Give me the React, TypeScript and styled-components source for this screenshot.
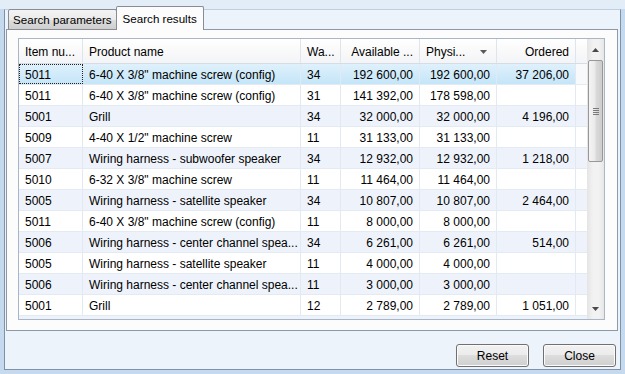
import React from 'react';
import styled, { createGlobalStyle } from 'styled-components';

type Align = 'left' | 'right';

interface Column {
  title: string;
  align: Align;
  sorted?: boolean;
}

interface Line {
  item: string;
  name: string;
  warehouse: string;
  available: string;
  physical: string;
  ordered: string;
}

const columns: Column[] = [
  { title: 'Item nu...', align: 'left' },
  { title: 'Product name', align: 'left' },
  { title: 'Wa...', align: 'left' },
  { title: 'Available ...', align: 'right' },
  { title: 'Physi...', align: 'left', sorted: true },
  { title: 'Ordered', align: 'right' },
];

const lines: Line[] = [
  { item: '5011', name: '6-40 X 3/8" machine screw (config)', warehouse: '34', available: '192 600,00', physical: '192 600,00', ordered: '37 206,00' },
  { item: '5011', name: '6-40 X 3/8" machine screw (config)', warehouse: '31', available: '141 392,00', physical: '178 598,00', ordered: '' },
  { item: '5001', name: 'Grill', warehouse: '34', available: '32 000,00', physical: '32 000,00', ordered: '4 196,00' },
  { item: '5009', name: '4-40 X 1/2" machine screw', warehouse: '11', available: '31 133,00', physical: '31 133,00', ordered: '' },
  { item: '5007', name: 'Wiring harness - subwoofer speaker', warehouse: '34', available: '12 932,00', physical: '12 932,00', ordered: '1 218,00' },
  { item: '5010', name: '6-32 X 3/8" machine screw', warehouse: '11', available: '11 464,00', physical: '11 464,00', ordered: '' },
  { item: '5005', name: 'Wiring harness - satellite speaker', warehouse: '34', available: '10 807,00', physical: '10 807,00', ordered: '2 464,00' },
  { item: '5011', name: '6-40 X 3/8" machine screw (config)', warehouse: '11', available: '8 000,00', physical: '8 000,00', ordered: '' },
  { item: '5006', name: 'Wiring harness - center channel spea...', warehouse: '34', available: '6 261,00', physical: '6 261,00', ordered: '514,00' },
  { item: '5005', name: 'Wiring harness - satellite speaker', warehouse: '11', available: '4 000,00', physical: '4 000,00', ordered: '' },
  { item: '5006', name: 'Wiring harness - center channel spea...', warehouse: '11', available: '3 000,00', physical: '3 000,00', ordered: '' },
  { item: '5001', name: 'Grill', warehouse: '12', available: '2 789,00', physical: '2 789,00', ordered: '1 051,00' },
];

const GRID_COLUMNS = '64px 218px 40px 79px 77px 79px 11px';

const GlobalStyle = createGlobalStyle`
  html, body {
    margin: 0;
    padding: 0;
  }
  body {
    font-family: "Liberation Sans", Arial, sans-serif;
    font-size: 12px;
    color: #000;
  }
`;

const Window = styled.div`
  width: 625px;
  height: 374px;
  box-sizing: border-box;
  padding: 9px 4px 4px 4px;
  display: flex;
  background: linear-gradient(#e3edf8 0, #e3edf8 9px, #c6daef 9px);
`;

const Client = styled.div`
  flex: 1;
  display: flex;
  flex-direction: column;
  padding: 0 2px 0 1px;
  background: #edf3fb;
  border: 1px solid #7f91a8;
  border-top-color: #bfcfe2;
`;

const TabStrip = styled.div`
  display: flex;
  align-items: flex-end;
  height: 20px;
  margin-bottom: -1px;
  padding-left: 2px;
  position: relative;
  z-index: 1;
`;

const Tab = styled.div<{ $active?: boolean }>`
  box-sizing: border-box;
  height: ${(p) => (p.$active ? '24px' : '21px')};
  padding: ${(p) => (p.$active ? '0 6px 1px 6px' : '0 4px')};
  display: flex;
  align-items: center;
  font-size: 11.6px;
  border: 1px solid #898c95;
  border-bottom: ${(p) => (p.$active ? 'none' : '1px solid #898c95')};
  border-radius: 2px 2px 0 0;
  white-space: nowrap;
  background: ${(p) =>
    p.$active
      ? '#fcfcfc'
      : 'linear-gradient(#f3f3f3 0%, #ebebeb 50%, #dddddd 51%, #cfcfcf 100%)'};
  margin-left: ${(p) => (p.$active ? '-1px' : '0')};
`;

const Panel = styled.div`
  box-sizing: border-box;
  height: 302px;
  padding: 8px 12px 10px 11px;
  background: #fcfcfc;
  border: 1px solid #8d99a8;
`;

const Grid = styled.div`
  box-sizing: border-box;
  height: 282px;
  display: flex;
  background: #fff;
  border: 1px solid #a9b6c6;
  overflow: hidden;
`;

const Table = styled.div`
  flex: 1;
  display: flex;
  flex-direction: column;
  overflow: hidden;
`;

const HeaderRow = styled.div`
  box-sizing: border-box;
  height: 25px;
  display: grid;
  grid-template-columns: ${GRID_COLUMNS};
  background: linear-gradient(#ffffff, #f3f4f6);
  border-bottom: 1px solid #d5dce5;
`;

const HeaderCell = styled.div<{ $align: Align }>`
  display: flex;
  align-items: center;
  justify-content: ${(p) => (p.$align === 'right' ? 'flex-end' : 'space-between')};
  padding: 1px 6px 0 6px;
  border-right: 1px solid #e0e5eb;
  white-space: nowrap;
  overflow: hidden;
`;

const SortMark = styled.svg`
  margin-right: 3px;
  flex: none;
`;

const Body = styled.div`
  flex: 1;
  overflow: hidden;
`;

const DataRow = styled.div<{ $tint: boolean; $selected: boolean }>`
  box-sizing: border-box;
  height: 21px;
  display: grid;
  grid-template-columns: ${GRID_COLUMNS};
  border-bottom: 1px solid #e4eaf2;
  background: ${(p) =>
    p.$selected
      ? 'linear-gradient(#dff1fc, #c4e5f8)'
      : p.$tint
      ? '#eef3fb'
      : '#ffffff'};
`;

const Cell = styled.div<{ $align: Align; $focus?: boolean }>`
  padding: 2px 6px 0 6px;
  line-height: 18px;
  text-align: ${(p) => p.$align};
  border-right: 1px solid #e2e9f2;
  white-space: nowrap;
  overflow: hidden;
  outline: ${(p) => (p.$focus ? '1px dotted #222' : 'none')};
  outline-offset: -1px;
`;

const Filler = styled.div<{ $plain: boolean }>`
  background: ${(p) => (p.$plain ? '#f7f9fb' : 'transparent')};
`;

const ScrollBar = styled.div`
  width: 17px;
  display: flex;
  flex-direction: column;
  background: linear-gradient(to right, #e4e4e4, #f2f2f2 35%, #f2f2f2 70%, #e6e6e6);
`;

const ArrowButton = styled.div`
  height: 21px;
  flex: none;
  display: flex;
  align-items: center;
  justify-content: center;
`;

const Thumb = styled.div`
  box-sizing: border-box;
  height: 102px;
  margin: 0 1px;
  flex: none;
  display: flex;
  align-items: center;
  justify-content: center;
  border: 1px solid #989898;
  border-radius: 2px;
  background: linear-gradient(to right, #f4f4f4 0%, #eaeaea 45%, #dadada 55%, #cdcdcd 100%);
`;

const Grip = styled.div`
  width: 6px;
  height: 7px;
  background: repeating-linear-gradient(#7a7a7a 0 1px, transparent 1px 2px);
`;

const Track = styled.div`
  flex: 1;
`;

const ButtonBar = styled.div`
  flex: 1;
  display: flex;
  justify-content: flex-end;
  align-items: flex-start;
  gap: 14px;
  padding: 13px 2px 0 0;
`;

const Button = styled.button`
  box-sizing: border-box;
  width: 73px;
  height: 23px;
  padding: 1px 0 0 0;
  border: 1px solid #707070;
  border-radius: 3px;
  background: linear-gradient(#f2f2f2 0%, #ebebeb 49%, #dddddd 50%, #cfcfcf 100%);
  box-shadow: inset 0 0 0 1px #fbfbfb;
  font-family: "Liberation Sans", Arial, sans-serif;
  font-size: 12px;
  color: #000;
`;

const Triangle = ({ up, color }: { up?: boolean; color: string }) => (
  <svg width="7" height="4" viewBox="0 0 7 4">
    <path d={up ? 'M0 4 L3.5 0 L7 4 Z' : 'M0 0 L7 0 L3.5 4 Z'} fill={color} />
  </svg>
);

const App = () => {
  return (
    <Window>
      <GlobalStyle />
      <Client>
        <TabStrip>
          <Tab>Search parameters</Tab>
          <Tab $active>Search results</Tab>
        </TabStrip>
        <Panel>
          <Grid>
            <Table>
              <HeaderRow>
                {columns.map((c) => (
                  <HeaderCell key={c.title} $align={c.align}>
                    <span>{c.title}</span>
                    {c.sorted && (
                      <SortMark width="7" height="4" viewBox="0 0 7 4">
                        <path d="M0 0 L7 0 L3.5 4 Z" fill="#5a5a5a" />
                      </SortMark>
                    )}
                  </HeaderCell>
                ))}
                <div />
              </HeaderRow>
              <Body>
                {lines.map((l, i) => (
                  <DataRow key={i} $tint={i % 2 === 0} $selected={i === 0}>
                    <Cell $align="left" $focus={i === 0}>{l.item}</Cell>
                    <Cell $align="left">{l.name}</Cell>
                    <Cell $align="left">{l.warehouse}</Cell>
                    <Cell $align="right">{l.available}</Cell>
                    <Cell $align="right">{l.physical}</Cell>
                    <Cell $align="right">{l.ordered}</Cell>
                    <Filler $plain={i === 0} />
                  </DataRow>
                ))}
                <DataRow $tint $selected={false} />
              </Body>
            </Table>
            <ScrollBar>
              <ArrowButton>
                <Triangle up color="#4a4a4a" />
              </ArrowButton>
              <Thumb>
                <Grip />
              </Thumb>
              <Track />
              <ArrowButton>
                <Triangle color="#4a4a4a" />
              </ArrowButton>
            </ScrollBar>
          </Grid>
        </Panel>
        <ButtonBar>
          <Button>Reset</Button>
          <Button>Close</Button>
        </ButtonBar>
      </Client>
    </Window>
  );
};

export default App;
